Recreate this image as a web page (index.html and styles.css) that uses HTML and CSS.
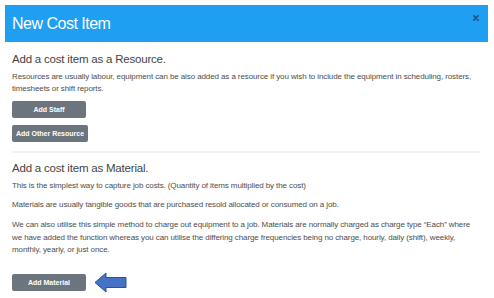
FILE: index.html
```html
<!DOCTYPE html>
<html>
<head>
<meta charset="utf-8">
<link rel="stylesheet" href="styles.css">
</head>
<body>
<div class="modal">
  <div class="header">
    <div class="title">New Cost Item</div>
    <svg class="close" width="6" height="6" viewBox="0 0 6 6" aria-label="Close">
      <path d="M0.8 0.8 L5.2 5.2 M5.2 0.8 L0.8 5.2" stroke="#1d4a70" stroke-width="1.4" stroke-linecap="round"/>
    </svg>
  </div>
  <div class="content">
    <h2 class="h2 first">Add a cost item as a Resource.</h2>
    <p class="p p-res">Resources are usually labour, equipment can be also added as a resource if you wish to include the equipment in scheduling, rosters, timesheets or shift reports.</p>
    <div class="btns">
      <button class="btn">Add Staff</button>
      <button class="btn">Add Other Resource</button>
    </div>
    <div class="divider"></div>
    <h2 class="h2 second">Add a cost item as Material.</h2>
    <p class="p p-a">This is the simplest way to capture job costs. (Quantity of items multiplied by the cost)</p>
    <p class="p p-b">Materials are usually tangible goods that are purchased resold allocated or consumed on a job.</p>
    <p class="p p-c">We can also utilise this simple method to charge out equipment to a job. Materials are normally charged as charge type “Each” where we have added the function whereas you can utilise the differing charge frequencies being no charge, hourly, daily (shift), weekly, monthly, yearly, or just once.</p>
    <div class="mat-row">
      <button class="btn">Add Material</button>
      <svg class="arrow" width="33" height="21" viewBox="0 0 33 21">
        <polygon points="1,10.5 12,1 12,5.5 32,5.5 32,15.5 12,15.5 12,20" fill="#4472c4" stroke="#2f528f" stroke-width="1"/>
      </svg>
    </div>
  </div>
</div>
</body>
</html>
```
FILE: styles.css
```css
html, body {
  margin: 0;
  padding: 0;
  background: #fff;
}
body {
  font-family: "Liberation Sans", Arial, sans-serif;
}
.modal {
  margin: 5px 6px 0 5px;
}
.header {
  height: 37px;
  background: #1e9ff2;
  display: flex;
  align-items: center;
  justify-content: space-between;
  padding: 0 7px;
}
.title {
  color: #fff;
  font-size: 16px;
  letter-spacing: -0.5px;
  line-height: 20px;
  margin-top: 1px;
}
.close {
  display: block;
  align-self: flex-start;
  margin-top: 10px;
  margin-right: 2px;
}
.content {
  padding: 0 7px;
}
.h2 {
  font-weight: normal;
  font-size: 11.5px;
  letter-spacing: -0.2px;
  line-height: 16px;
  color: #444;
  margin: 0;
}
.h2.first { margin-top: 9px; }
.h2.second { margin-top: 7px; }
.p {
  font-size: 8px;
  letter-spacing: -0.1px;
  line-height: 12px;
  color: #4d4d4d;
  margin: 0;
}
.p-res { margin-top: 4px; }
.p-a { margin-top: 4px; }
.p-b { margin-top: 7px; }
.p-c { margin-top: 8px; line-height: 12.5px; }
.btns {
  display: flex;
  flex-direction: column;
  align-items: flex-start;
  gap: 7px;
  margin-top: 6px;
}
.btn {
  height: 17px;
  min-width: 74px;
  padding: 0 4px;
  border: none;
  border-radius: 2px;
  background: #6c757d;
  color: #fff;
  font-family: "Liberation Sans", Arial, sans-serif;
  font-weight: bold;
  font-size: 7px;
  line-height: 17px;
  box-sizing: border-box;
}
.divider {
  height: 2px;
  background: #f1f1f1;
  margin-top: 9px;
  margin-right: 1px;
}
.mat-row {
  display: flex;
  align-items: center;
  gap: 8px;
  margin-top: 15px;
}
.arrow {
  display: block;
}
```
